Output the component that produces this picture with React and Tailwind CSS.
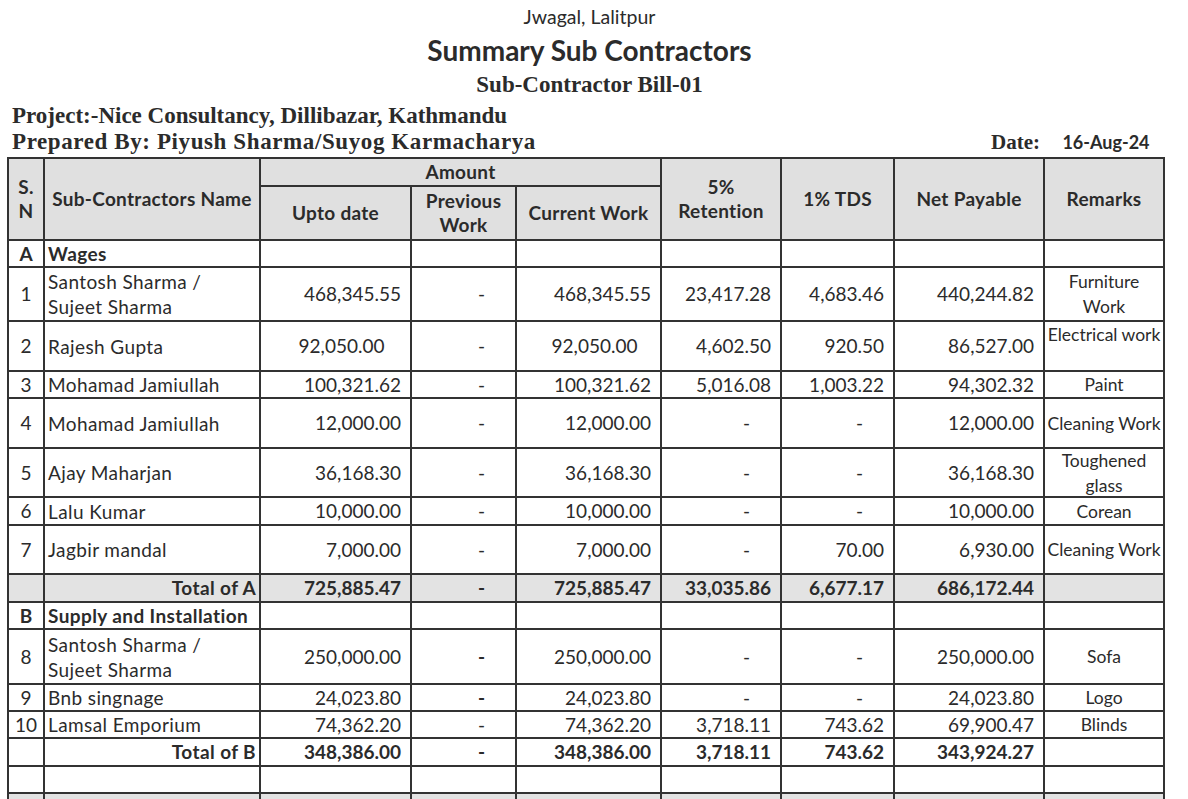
import React from "react";

const rowsA = [
  { sn: "1", name: ["Santosh Sharma /", "Sujeet Sharma"], upto: "468,345.55", cur: "468,345.55", ret: "23,417.28", tds: "4,683.46", net: "440,244.82", rem: ["Furniture", "Work"], h: "h-[54px]" },
  { sn: "2", name: ["Rajesh Gupta"], upto: "92,050.00", cur: "92,050.00", ret: "4,602.50", tds: "920.50", net: "86,527.00", rem: ["Electrical work"], h: "h-[50px]", odd: true },
  { sn: "3", name: ["Mohamad Jamiullah"], upto: "100,321.62", cur: "100,321.62", ret: "5,016.08", tds: "1,003.22", net: "94,302.32", rem: ["Paint"], h: "h-[27px]" },
  { sn: "4", name: ["Mohamad Jamiullah"], upto: "12,000.00", cur: "12,000.00", ret: "-", tds: "-", net: "12,000.00", rem: ["Cleaning Work"], h: "h-[50px]" },
  { sn: "5", name: ["Ajay Maharjan"], upto: "36,168.30", cur: "36,168.30", ret: "-", tds: "-", net: "36,168.30", rem: ["Toughened", "glass"], h: "h-[49px]" },
  { sn: "6", name: ["Lalu Kumar"], upto: "10,000.00", cur: "10,000.00", ret: "-", tds: "-", net: "10,000.00", rem: ["Corean"], h: "h-[28px]" },
  { sn: "7", name: ["Jagbir mandal"], upto: "7,000.00", cur: "7,000.00", ret: "-", tds: "70.00", net: "6,930.00", rem: ["Cleaning Work"], h: "h-[49px]" },
];

const rowsB = [
  { sn: "8", name: ["Santosh Sharma /", "Sujeet Sharma"], upto: "250,000.00", cur: "250,000.00", ret: "-", tds: "-", net: "250,000.00", rem: ["Sofa"], h: "h-[55px]", boldDash: true },
  { sn: "9", name: ["Bnb singnage"], upto: "24,023.80", cur: "24,023.80", ret: "-", tds: "-", net: "24,023.80", rem: ["Logo"], h: "h-[27px]", boldDash: true },
  { sn: "10", name: ["Lamsal Emporium"], upto: "74,362.20", cur: "74,362.20", ret: "3,718.11", tds: "743.62", net: "69,900.47", rem: ["Blinds"], h: "h-[27px]" },
];

const cell = "border-2 border-[#333] align-middle";
const serif = "font-['Liberation_Serif',serif]";

// valeur numérique : tiret décalé comme dans Excel
function Num({ v, bold }) {
  if (v === "-") {
    return <td className={`${cell} text-right pr-[30px] ${bold ? "font-bold" : ""}`}>-</td>;
  }
  return <td className={`${cell} text-right pr-[9px] ${bold ? "font-bold" : ""}`}>{v}</td>;
}

function Row({ r }) {
  return (
    <tr className={r.h}>
      <td className={`${cell} text-center`}>{r.sn}</td>
      <td className={`${cell} pl-[3px] tracking-[0.4px]`}>
        <div className="leading-[25px] -my-[3px]">
          {r.name.map((n, i) => (
            <div key={i}>{n}</div>
          ))}
        </div>
      </td>
      {r.odd ? (
        <td className={`${cell} text-center pl-[12px]`}>{r.upto}</td>
      ) : (
        <Num v={r.upto} />
      )}
      <Num v="-" bold={r.boldDash} />
      {r.odd ? (
        <td className={`${cell} text-center pl-[12px]`}>{r.cur}</td>
      ) : (
        <Num v={r.cur} />
      )}
      <Num v={r.ret} />
      <Num v={r.tds} />
      <Num v={r.net} />
      <td className={`${cell} text-center text-[17.5px] whitespace-nowrap ${r.odd ? "align-top" : ""}`}>
        <div className={`leading-[25px] ${r.odd ? "" : "-my-[4px]"}`}>
          {r.rem.map((n, i) => (
            <div key={i}>{n}</div>
          ))}
        </div>
      </td>
    </tr>
  );
}

function TotalRow({ label, vals, gray }) {
  return (
    <tr className={`h-[28px] font-bold ${gray ? "bg-[#e3e3e3]" : ""}`}>
      <td className={cell}></td>
      <td className={`${cell} text-right pr-[3px] tracking-[0.4px]`}>{label}</td>
      <Num v={vals[0]} bold />
      <Num v="-" bold />
      <Num v={vals[1]} bold />
      <Num v={vals[2]} bold />
      <Num v={vals[3]} bold />
      <Num v={vals[4]} bold />
      <td className={cell}></td>
    </tr>
  );
}

function SectionRow({ letter, title }) {
  return (
    <tr className="h-[27px] font-bold">
      <td className={`${cell} text-center`}>{letter}</td>
      <td className={`${cell} pl-[3px] whitespace-nowrap tracking-[0.4px]`}>{title}</td>
      {Array.from({ length: 7 }).map((_, i) => (
        <td key={i} className={cell}></td>
      ))}
    </tr>
  );
}

export default function App() {
  return (
    <div className="w-[1188px] h-[799px] overflow-hidden bg-white text-[#2b2b2b] font-['Lato',sans-serif]">
      <div className="w-[1172px] pl-[7px]">
        <div className="text-center text-[19.5px] leading-[20px] pt-[7px]">Jwagal, Lalitpur</div>
        <div className="text-center text-[28px] font-bold leading-[32px] mt-[7px]">Summary Sub Contractors</div>
        <div className={`text-center text-[23px] font-bold leading-[26px] mt-[6px] ${serif}`}>Sub-Contractor Bill-01</div>
        <div className={`text-[23px] font-bold leading-[26px] pl-[5px] mt-[5px] ${serif}`}>
          Project:-Nice Consultancy, Dillibazar, Kathmandu
        </div>
        <div className="flex items-end leading-[26px] pl-[5px] pr-[8px]">
          <div className={`text-[23px] font-bold tracking-[0.6px] ${serif}`}>Prepared By: Piyush Sharma/Suyog Karmacharya</div>
          <div className={`ml-auto mr-[4px] text-[21px] font-bold ${serif}`}>Date:</div>
          <div className="w-[120px] text-[18px] font-bold text-center pl-[4px]">16-Aug-24</div>
        </div>

        <table className="mt-[2px] border-collapse table-fixed w-[1158px] text-[19px] leading-[24px]">
          <colgroup>
            <col className="w-[36px]" />
            <col className="w-[216px]" />
            <col className="w-[151px]" />
            <col className="w-[105px]" />
            <col className="w-[145px]" />
            <col className="w-[120px]" />
            <col className="w-[113px]" />
            <col className="w-[150px]" />
            <col className="w-[120px]" />
          </colgroup>
          <thead className="bg-[#e0e0e0] font-bold tracking-[0.3px]">
            <tr className="h-[28px]">
              <th rowSpan={2} className={`${cell} text-center`}>
                <div>S.</div>
                <div>N</div>
              </th>
              <th rowSpan={2} className={`${cell} text-center whitespace-nowrap`}>Sub-Contractors Name</th>
              <th colSpan={3} className={`${cell} text-center`}>Amount</th>
              <th rowSpan={2} className={`${cell} text-center`}>
                <div>5%</div>
                <div>Retention</div>
              </th>
              <th rowSpan={2} className={`${cell} text-center`}>1% TDS</th>
              <th rowSpan={2} className={`${cell} text-center`}>Net Payable</th>
              <th rowSpan={2} className={`${cell} text-center`}>Remarks</th>
            </tr>
            <tr className="h-[54px]">
              <th className={`${cell} text-center`}>Upto date</th>
              <th className={`${cell} text-center`}>
                <div>Previous</div>
                <div>Work</div>
              </th>
              <th className={`${cell} text-center whitespace-nowrap`}>Current Work</th>
            </tr>
          </thead>
          <tbody>
            <SectionRow letter="A" title="Wages" />
            {rowsA.map((r) => (
              <Row key={r.sn} r={r} />
            ))}
            <TotalRow label="Total of A" gray vals={["725,885.47", "725,885.47", "33,035.86", "6,677.17", "686,172.44"]} />
            <SectionRow letter="B" title="Supply and Installation" />
            {rowsB.map((r) => (
              <Row key={r.sn} r={r} />
            ))}
            <TotalRow label="Total of B" vals={["348,386.00", "348,386.00", "3,718.11", "743.62", "343,924.27"]} />
            <tr className="h-[27px]">
              {Array.from({ length: 9 }).map((_, i) => (
                <td key={i} className={cell}></td>
              ))}
            </tr>
            <tr className="h-[28px] bg-[#e3e3e3]">
              {Array.from({ length: 9 }).map((_, i) => (
                <td key={i} className={cell}></td>
              ))}
            </tr>
          </tbody>
        </table>
      </div>
    </div>
  );
}
